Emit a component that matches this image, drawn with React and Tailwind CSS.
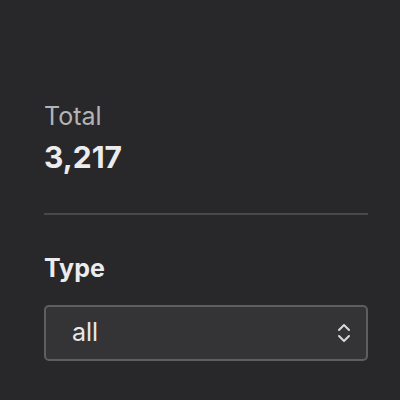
export default function App() {
  return (
    <div
      className="w-[400px] h-[400px] bg-[#28282a] text-[#e8e8ea] overflow-hidden"
      style={{ fontFamily: "Inter, 'Liberation Sans', sans-serif" }}
    >
      <div className="pl-[44px] pr-[32px] pt-[100px]">
        {/* Summary */}
        <div className="text-[25px] leading-[32px] text-[#b4b4b6]">Total</div>
        <div className="mt-[7px] text-[30px] leading-[36px] font-bold text-[#ececee]">
          3,217
        </div>

        <div className="mt-[38px] h-[2px] bg-[#48484a]" />

        {/* Filter */}
        <div className="mt-[37px] text-[25px] leading-[32px] font-bold text-[#ececee]">
          Type
        </div>
        <div className="mt-[21px] h-[56px] rounded-[5px] border-2 border-[#5e5e60] bg-[#343436] flex items-center justify-between pl-[26px] pr-[14px]">
          <span className="text-[25px] text-[#e8e8ea]">all</span>
          <svg
            width="16"
            height="22"
            viewBox="0 0 16 22"
            fill="none"
            stroke="#d8d8da"
            strokeWidth="2"
            strokeLinecap="round"
            strokeLinejoin="round"
          >
            <path d="M3 8l5-5 5 5" />
            <path d="M3 14l5 5 5-5" />
          </svg>
        </div>
      </div>
    </div>
  );
}
